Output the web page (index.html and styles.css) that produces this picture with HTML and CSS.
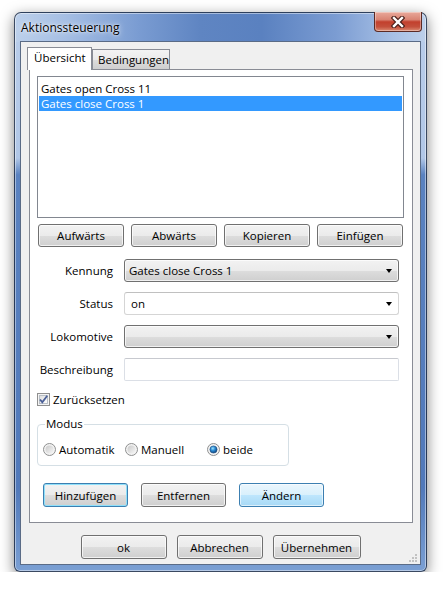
FILE: index.html
```html
<!DOCTYPE html>
<html lang="de">
<head>
    <meta charset="UTF-8">
    <title>Aktionssteuerung</title>
    <link rel="stylesheet" href="styles.css">
</head>
<body>
    <div class="window">
        <div class="titlebar">
            <span class="title">Aktionssteuerung</span>
            <div class="close-btn">
                <svg width="14" height="12" viewBox="0 0 14 12">
                    <path d="M3 2 L11 10 M11 2 L3 10" stroke="#4a1f1a" stroke-width="4.6" stroke-linecap="square"/>
                    <path d="M3 2 L11 10 M11 2 L3 10" stroke="#ffffff" stroke-width="2.4" stroke-linecap="square"/>
                </svg>
            </div>
        </div>

        <div class="client">
            <div class="tabs">
                <div class="tab active">Übersicht</div>
                <div class="tab">Bedingungen</div>
            </div>

            <div class="panel">
                <div class="listbox">
                    <div class="item">Gates open Cross 11</div>
                    <div class="item selected">Gates close Cross 1</div>
                </div>

                <div class="list-btns">
                    <button class="btn">Aufwärts</button>
                    <button class="btn">Abwärts</button>
                    <button class="btn">Kopieren</button>
                    <button class="btn">Einfügen</button>
                </div>

                <div class="form">
                    <div class="form-row">
                        <label>Kennung</label>
                        <div class="combo readonly">Gates close Cross 1<span class="arrow"></span></div>
                    </div>
                    <div class="form-row">
                        <label>Status</label>
                        <div class="combo editable">on<span class="arrow"></span></div>
                    </div>
                    <div class="form-row">
                        <label>Lokomotive</label>
                        <div class="combo readonly"><span class="arrow"></span></div>
                    </div>
                    <div class="form-row">
                        <label>Beschreibung</label>
                        <div class="textbox"></div>
                    </div>
                </div>

                <div class="check-row">
                    <svg class="checkbox" width="13" height="13" viewBox="0 0 13 13">
                        <defs>
                            <linearGradient id="cbg" x1="0" y1="0" x2="1" y2="1">
                                <stop offset="0" stop-color="#dcdcdc"/>
                                <stop offset="1" stop-color="#ffffff"/>
                            </linearGradient>
                        </defs>
                        <rect x="0.5" y="0.5" width="12" height="12" fill="#f4f4f4" stroke="#8f8f8f"/>
                        <rect x="2.5" y="2.5" width="8" height="8" fill="url(#cbg)" stroke="#b9bfc6"/>
                        <path d="M3 6.5 L5.3 9.2 L10.2 2.8" fill="none" stroke="#4a5f97" stroke-width="1.8"/>
                    </svg>
                    <span>Zurücksetzen</span>
                </div>

                <fieldset class="groupbox">
                    <legend>Modus</legend>
                    <div class="radios">
                        <div class="radio">
                            <svg width="13" height="13" viewBox="0 0 13 13">
                                <defs>
                                    <linearGradient id="rbg" x1="0" y1="0" x2="1" y2="1">
                                        <stop offset="0" stop-color="#c9c9c9"/>
                                        <stop offset="1" stop-color="#f7f7f7"/>
                                    </linearGradient>
                                </defs>
                                <circle cx="6.5" cy="6.5" r="6" fill="#f2f2f2" stroke="#8e8f8f"/>
                                <circle cx="6.5" cy="6.5" r="4" fill="url(#rbg)"/>
                            </svg>
                            <span>Automatik</span>
                        </div>
                        <div class="radio">
                            <svg width="13" height="13" viewBox="0 0 13 13">
                                <circle cx="6.5" cy="6.5" r="6" fill="#f2f2f2" stroke="#8e8f8f"/>
                                <circle cx="6.5" cy="6.5" r="4" fill="url(#rbg)"/>
                            </svg>
                            <span>Manuell</span>
                        </div>
                        <div class="radio">
                            <svg width="13" height="13" viewBox="0 0 13 13">
                                <defs>
                                    <radialGradient id="rdot" cx="0.4" cy="0.35" r="0.7">
                                        <stop offset="0" stop-color="#9ee3fc"/>
                                        <stop offset="0.45" stop-color="#2a8ad4"/>
                                        <stop offset="1" stop-color="#0d3c73"/>
                                    </radialGradient>
                                </defs>
                                <circle cx="6.5" cy="6.5" r="6" fill="#f2f2f2" stroke="#8e8f8f"/>
                                <circle cx="6.5" cy="6.5" r="3.6" fill="url(#rdot)" stroke="#1b4b80" stroke-width="0.6"/>
                            </svg>
                            <span>beide</span>
                        </div>
                    </div>
                </fieldset>

                <div class="action-btns">
                    <button class="btn focused">Hinzufügen</button>
                    <button class="btn">Entfernen</button>
                    <button class="btn default">Ändern</button>
                </div>
            </div>

            <div class="dialog-btns">
                <button class="btn">ok</button>
                <button class="btn">Abbrechen</button>
                <button class="btn wide">Übernehmen</button>
            </div>

            <svg class="grip" width="8" height="8" viewBox="0 0 8 8">
                <rect x="6" y="0" width="2" height="2" fill="#c2c2c2"/>
                <rect x="3" y="3" width="2" height="2" fill="#c2c2c2"/>
                <rect x="6" y="3" width="2" height="2" fill="#c2c2c2"/>
                <rect x="0" y="6" width="2" height="2" fill="#c2c2c2"/>
                <rect x="3" y="6" width="2" height="2" fill="#c2c2c2"/>
                <rect x="6" y="6" width="2" height="2" fill="#c2c2c2"/>
            </svg>
        </div>
    </div>
</body>
</html>
```

FILE: styles.css
```css
body {
    margin: 0;
    background: #ffffff;
    font-family: 'Open Sans', 'Noto Sans', sans-serif;
    font-size: 11px;
    color: #000;
}
.window {
    margin: 12px 0 0 14px;
    width: 413px;
    height: 560px;
    box-sizing: border-box;
    display: flex;
    flex-direction: column;
    padding: 0 5px 6px 5px;
    border: 1px solid rgba(28, 40, 62, 0.8);
    border-radius: 7px 7px 6px 6px;
    background:
        linear-gradient(to right, #bcd0eb 0%, #a6bfe4 12%, #7a9cd2 30%, #5f85c2 45%, #5a81c0 60%, #7b9cd2 78%, #a7c0e5 92%, #bdd0ea 100%) top / 100% 29px no-repeat,
        linear-gradient(to bottom, #b9cdea 0%, #b1c7e7 26%, #5a82c0 29%, #5179ba 85%, #7a9fd3 100%);
    box-shadow: 0 4px 14px rgba(0, 0, 0, 0.5), inset 0 0 0 1px rgba(255, 255, 255, 0.45);
}
.titlebar {
    height: 28px;
    display: flex;
    align-items: center;
    padding: 0 0 0 1px;
}
.title {
    font-size: 12px;
    padding-top: 1px;
    text-shadow: 0 0 6px rgba(255, 255, 255, 0.9), 0 0 2px rgba(255, 255, 255, 0.9);
}
.close-btn {
    margin-left: auto;
    margin-right: -1px;
    align-self: flex-start;
    margin-top: -1px;
    width: 48px;
    height: 20px;
    box-sizing: border-box;
    border: 1px solid #5b2a24;
    border-top: none;
    border-radius: 0 0 4px 4px;
    background: linear-gradient(to bottom, #e9a99b 0%, #d98474 40%, #c2402d 52%, #c4503c 78%, #dc8d74 100%);
    box-shadow: inset 0 0 0 1px rgba(255, 255, 255, 0.35);
    display: flex;
    align-items: center;
    justify-content: center;
}
.client {
    flex: 1;
    position: relative;
    display: flex;
    flex-direction: column;
    background: #f0f0f0;
    border: 1px solid #5a6b86;
}
.tabs {
    display: flex;
    align-items: flex-end;
    margin: 5px 0 -1px 6px;
    position: relative;
    z-index: 1;
}
.tab {
    box-sizing: border-box;
    height: 20px;
    margin-bottom: 1px;
    padding: 0 5px;
    border: 1px solid #898c95;
    border-bottom: none;
    background: linear-gradient(to bottom, #f3f3f3 0%, #ebebeb 50%, #dddddd 51%, #cfcfcf 100%);
    line-height: 19px;
}
.tab + .tab {
    width: 78px;
    font-size: 11.5px;
}
.tab.active {
    width: 65px;
    height: 23px;
    margin-bottom: 0;
    background: #ffffff;
    font-size: 11.5px;
    line-height: 20px;
    padding: 0 6px;
}
.panel {
    height: 454px;
    box-sizing: border-box;
    margin: 0 7px 0 8px;
    padding: 6px 8px 15px 7px;
    border: 1px solid #898c95;
    background: #ffffff;
    display: flex;
    flex-direction: column;
}
.listbox {
    height: 142px;
    box-sizing: border-box;
    border: 1px solid #828790;
    padding: 4px 1px 0 1px;
}
.item {
    height: 15px;
    line-height: 15px;
    padding-left: 2px;
    font-size: 11.5px;
}
.item.selected {
    background: #3399ff;
    color: #ffffff;
}
.btn {
    box-sizing: border-box;
    height: 23px;
    padding: 0;
    font-family: inherit;
    font-size: 11.5px;
    color: #000;
    border: 1px solid #707070;
    border-radius: 3px;
    background: linear-gradient(to bottom, #f2f2f2 0%, #ebebeb 50%, #dddddd 51%, #cfcfcf 100%);
    box-shadow: inset 0 0 0 1px rgba(255, 255, 255, 0.7);
}
.btn.focused {
    border-color: #3c7fb1;
    box-shadow: inset 0 0 0 1px #8fe0fa;
}
.btn.default {
    border-color: #3c7fb1;
    background: linear-gradient(to bottom, #eaf6fd 0%, #d9f0fc 50%, #bee6fd 51%, #a7d9f5 100%);
    box-shadow: inset 0 0 0 1px rgba(255, 255, 255, 0.6);
}
.list-btns {
    display: flex;
    gap: 7px;
    margin: 6px 0 0 1px;
}
.list-btns .btn {
    width: 86px;
}
.form {
    display: flex;
    flex-direction: column;
    gap: 10px;
    margin-top: 12px;
}
.form-row {
    display: grid;
    grid-template-columns: 76px 275px;
    column-gap: 11px;
    align-items: center;
    height: 23px;
}
.form-row label {
    text-align: right;
    font-size: 11.5px;
}
.combo {
    position: relative;
    box-sizing: border-box;
    height: 23px;
    line-height: 21px;
    padding-left: 4px;
    font-size: 11.5px;
    border-radius: 3px;
}
.combo.readonly {
    border: 1px solid #707070;
    background: linear-gradient(to bottom, #f2f2f2 0%, #ebebeb 50%, #dddddd 51%, #cfcfcf 100%);
    box-shadow: inset 0 0 0 1px rgba(255, 255, 255, 0.7);
}
.combo.editable {
    border: 1px solid #d5d5d5;
    border-top-color: #c0c0c0;
    background: #ffffff;
    padding-left: 6px;
}
.arrow {
    position: absolute;
    right: 6px;
    top: 9px;
    width: 0;
    height: 0;
    border-left: 3.5px solid transparent;
    border-right: 3.5px solid transparent;
    border-top: 4px solid #000;
}
.textbox {
    box-sizing: border-box;
    height: 23px;
    border: 1px solid #dbdfe6;
    border-top-color: #c7c9cf;
    border-radius: 2px;
    background: #ffffff;
}
.check-row {
    display: flex;
    align-items: center;
    gap: 3px;
    height: 14px;
    margin-top: 11px;
    font-size: 11.5px;
}
.groupbox {
    height: 50px;
    box-sizing: border-box;
    width: 252px;
    min-inline-size: 0;
    margin: 10px 0 0 0;
    padding: 0 5px;
    border: 1px solid #d5dfe5;
    border-radius: 4px;
}
.groupbox legend {
    margin-left: 2px;
    padding: 0 1px;
    line-height: 16px;
    font-size: 11.5px;
}
.radios {
    display: grid;
    grid-template-columns: 82px 82px 70px;
    margin-top: 10px;
    height: 14px;
}
.radio {
    display: flex;
    align-items: center;
    gap: 3px;
    font-size: 11.5px;
}
.action-btns {
    display: flex;
    gap: 13px;
    margin: 17px 0 0 6px;
}
.action-btns .btn {
    width: 85px;
    height: 24px;
}
.dialog-btns {
    display: flex;
    justify-content: center;
    gap: 10px;
    margin-top: 12px;
}
.dialog-btns .btn {
    width: 86px;
    height: 24px;
}
.dialog-btns .btn.wide {
    width: 88px;
}
.grip {
    position: absolute;
    right: 3px;
    bottom: 2px;
}
```
